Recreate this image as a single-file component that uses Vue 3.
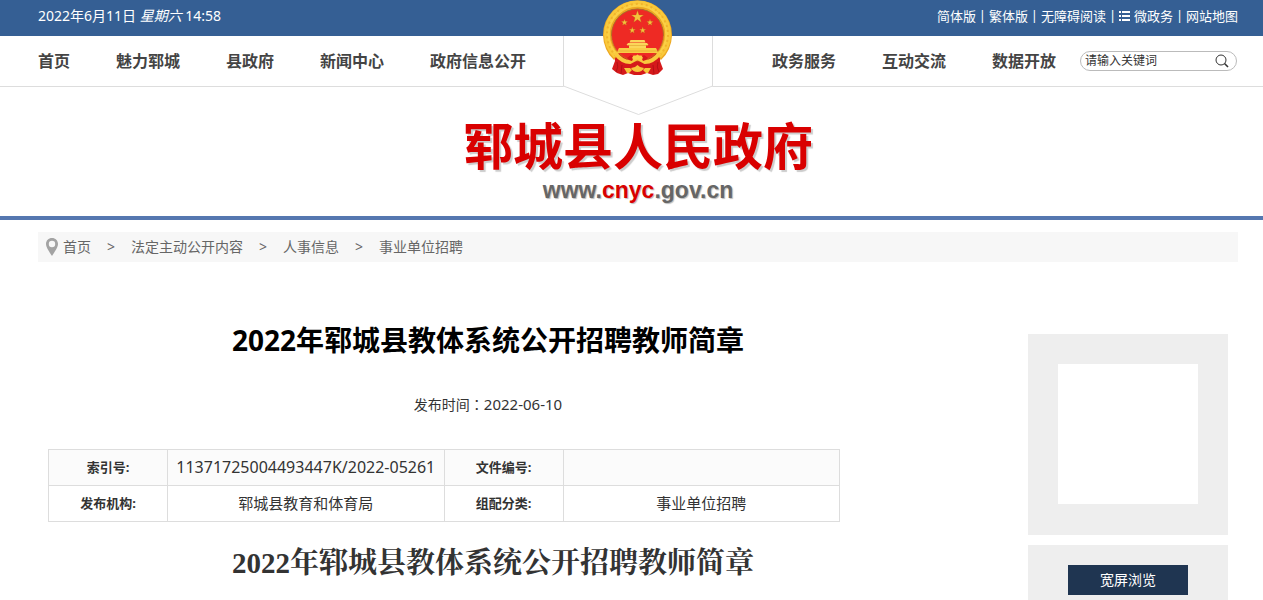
<script setup>
import { ref } from 'vue';

const keyword = ref('请输入关键词');
const wide = ref(false);

const leftNav = ['首页', '魅力郓城', '县政府', '新闻中心', '政府信息公开'];
const rightNav = ['政务服务', '互动交流', '数据开放'];
const topLinks = ['简体版', '繁体版', '无障碍阅读', '微政务', '网站地图'];
const crumbs = ['首页', '法定主动公开内容', '人事信息', '事业单位招聘'];

const title = '2022年郓城县教体系统公开招聘教师简章';

// five-pointed star as an svg points string
const star = (cx, cy, r) => {
  const points = [];
  for (let i = 0; i < 10; i++) {
    const radius = i % 2 ? r * 0.4 : r;
    const angle = (Math.PI / 5) * i - Math.PI / 2;
    points.push(`${(cx + radius * Math.cos(angle)).toFixed(2)},${(cy + radius * Math.sin(angle)).toFixed(2)}`);
  }
  return points.join(' ');
};

const stars = [
  star(74.5, 17, 6.5),
  star(61.5, 22.5, 3.5),
  star(87, 22.5, 3.5),
  star(69.3, 30.3, 3.5),
  star(79.7, 30.3, 3.5),
];
</script>

<template>
  <div class="page" :class="{ wide }">
    <header class="header">
      <div class="topbar">
        <div>2022年6月11日 <em>星期六</em> 14:58</div>
        <ul class="top-links">
          <li v-for="link in topLinks" :key="link">
            <svg v-if="link === '微政务'" class="list-icon" viewBox="0 0 11 11" fill="#fff">
              <path d="M0 1h2v2H0zM3 1h8v2H3zM0 5h2v2H0zM3 5h8v2H3zM0 9h2v2H0zM3 9h8v2H3z" />
            </svg>
            <a href="#">{{ link }}</a>
          </li>
        </ul>
      </div>

      <div class="navbar">
        <nav class="nav">
          <a v-for="item in leftNav" :key="item" href="#">{{ item }}</a>
        </nav>
        <div class="emblem">
          <svg width="150" height="116" viewBox="0 0 150 116">
            <path d="M0 36H150V86L75.500 114.500L0 86Z" fill="#fff" />
            <path d="M.5 36V86L75.500 114.500L149.500 86V36" fill="none" stroke="#ddd" />
            <path d="M51 53H98L97 61L100 69L95 74L90 75L84 73L78 75H71L65 73L60 75L54 73L49 69L52 61Z" fill="#d5191b" />
            <!-- ring of grain ears -->
            <path d="M51 60A34.500 34.500 0 1 1 98 60L93 53A26 26 0 1 0 56 53Z" fill="#eda823" />
            <circle cx="74.500" cy="35" r="26" fill="#ee2a24" stroke="#b9741a" stroke-width=".8" />
            <path d="M52 57A32 32 0 1 1 97 57" fill="none" stroke="#fac93a" stroke-width="3" />
            <path d="M54 55A29 29 0 1 1 95 55" fill="none" stroke="#fbd045" stroke-width="3" />
            <path d="M53 56A30.500 30.500 0 1 1 96 56" fill="none" stroke="#f0b42c" stroke-width="2"
              stroke-dasharray="2 3" />
            <polygon v-for="points in stars" :key="points" :points="points" fill="#f4c33c" stroke="#b85a18"
              stroke-width=".3" />
            <!-- gate tower -->
            <path d="M67.500 40H81.500L82.500 42.500H66.500ZM65 43H84L85.500 45H63.500ZM66 45H83V48H66Z" fill="#fbd65a" />
            <path d="M56 48H93L94 50L95 53H54L55 50Z" fill="#f9cc45" />
            <path d="M64 45.500H85M55 51H94" stroke="#e0a22c" stroke-width=".6" />
            <!-- crossed ears with the gear between them -->
            <path d="M52 53Q59 62 67 62L74.500 58L82 62Q90 62 97 53" fill="none" stroke="#f9c93e" stroke-width="4" />
            <path d="M64 58L68 55L71 57L69 61L66 60ZM85 58L81 55L78 57L80 61L83 60Z" fill="#d5191b" />
            <path d="M69 58L70.500 55.500H73L74.500 54.500L76 55.500H78.500L80 58L78 60L74.500 59L71 60Z" fill="#fbd045" />
            <path d="M68 68L72 67L74.500 65L77 67L81 68Q79 72 74.500 72Q70 72 68 68Z" fill="#f7c63c" />
            <path d="M61 68L67 68L69 70L66 73H64ZM88 68L82 68L80 70L83 73H85Z" fill="#f7c63c" />
            <path d="M54 62Q56 67 53 72M95 62Q93 67 96 72M59 65L58 74M90 65L91 74" fill="none" stroke="#a90f12"
              stroke-width=".8" />
          </svg>
        </div>
        <div class="nav-right">
          <nav class="nav">
            <a v-for="item in rightNav" :key="item" href="#">{{ item }}</a>
          </nav>
          <form class="search" @submit.prevent>
            <input v-model="keyword" type="text" aria-label="请输入关键词">
            <button type="submit" aria-label="搜索">
              <svg width="14" height="14" viewBox="0 0 14 14" fill="none" stroke="#333">
                <circle cx="6" cy="6" r="5" />
                <path d="M9.500 9.500L13 13" stroke-width="1.600" />
              </svg>
            </button>
          </form>
        </div>
      </div>
    </header>

    <div class="banner">
      <div class="site-name">郓城县人民政府</div>
      <div class="site-url">www.<span>cnyc</span>.gov.cn</div>
    </div>

    <div class="content">
      <nav class="crumbs">
        <svg width="12" height="18" viewBox="0 0 12 18">
          <path fill="#a3a3a3" fill-rule="evenodd"
            d="M6 0C2.500 0 0 2.600 0 6C0 9.500 3.500 14 6 18C8.500 14 12 9.500 12 6C12 2.600 9.500 0 6 0ZM6 2.800A3.200 3.200 0 1 1 6 9.200A3.200 3.200 0 1 1 6 2.800Z" />
        </svg>
        <template v-for="(crumb, i) in crumbs" :key="crumb">
          <span v-if="i" class="arrow">&gt;</span>
          <a href="#">{{ crumb }}</a>
        </template>
      </nav>

      <div class="columns">
        <main class="article">
          <h1>{{ title }}</h1>
          <p class="publish">发布时间：<time>2022-06-10</time></p>
          <div class="article-body">
            <table>
              <tbody>
                <tr>
                  <th scope="row">索引号:</th>
                  <td class="code">11371725004493447K/2022-05261</td>
                  <th scope="row">文件编号:</th>
                  <td></td>
                </tr>
                <tr>
                  <th scope="row">发布机构:</th>
                  <td>郓城县教育和体育局</td>
                  <th scope="row">组配分类:</th>
                  <td>事业单位招聘</td>
                </tr>
              </tbody>
            </table>
            <h2>{{ title }}</h2>
          </div>
        </main>

        <aside class="side">
          <div class="panel qr">
            <div class="qr-box"></div>
          </div>
          <div class="panel tools">
            <button type="button" @click="wide = !wide">宽屏浏览</button>
          </div>
        </aside>
      </div>
    </div>
  </div>
</template>

<style>
body {
  margin: 0;
  background: #fff;
}
</style>

<style scoped>
.page {
  font-family: "Noto Sans", "Noto Sans CJK SC", sans-serif;
  font-size: 14px;
  color: #333;
}

a {
  color: inherit;
  text-decoration: none;
}

.header {
  position: relative;
}

.topbar {
  display: flex;
  justify-content: space-between;
  align-items: center;
  height: 36px;
  padding: 0 25px 6px 38px;
  box-sizing: border-box;
  background: #355f94;
  color: #fff;
  white-space: nowrap;
}

.top-links {
  display: flex;
  margin: 0;
  padding: 0;
  list-style: none;
  font-size: 13px;
}

.top-links li {
  display: flex;
  align-items: center;
}

.top-links li + li::before {
  content: "|";
  width: 13px;
  text-align: center;
}

.list-icon {
  width: 11px;
  height: 11px;
  margin-right: 4px;
}

.navbar {
  display: grid;
  grid-template-columns: 1fr 150px 1fr;
  align-items: center;
  height: 50px;
  padding: 0 25px 0 38px;
  border-bottom: 1px solid #ddd;
  white-space: nowrap;
}

.nav {
  display: flex;
  gap: 46px;
  padding-bottom: 2px;
  font-size: 16px;
  font-weight: bold;
  color: #444;
}

/* the emblem hangs over the blue bar and the line under the menu */
.emblem {
  position: relative;
  align-self: start;
  height: 50px;
}

.emblem svg {
  position: absolute;
  top: -36px;
  left: 0;
}

.nav-right {
  display: flex;
  justify-content: flex-end;
  align-items: center;
  gap: 24px;
  padding-right: 1px;
}

.search {
  display: flex;
  align-items: center;
  width: 157px;
  height: 20px;
  box-sizing: border-box;
  padding: 0 7px 0 4px;
  border: 1px solid #bbb;
  border-radius: 10px;
}

.search input {
  flex: 1;
  min-width: 0;
  padding: 0;
  border: 0;
  outline: 0;
  background: none;
  font-family: inherit;
  font-size: 12px;
  line-height: 18px;
  color: #333;
}

.search button {
  display: flex;
  padding: 0;
  border: 0;
  background: none;
  cursor: pointer;
}

.banner {
  padding: 32px 25px 13px 38px;
  border-bottom: 4px solid #5577b0;
  font-family: "Liberation Sans", "Noto Sans CJK SC", sans-serif;
  font-weight: bold;
  text-align: center;
}

.site-name {
  font-size: 50px;
  line-height: 58px;
  color: #d90000;
  text-shadow: 2px 2px 1px #ccc;
}

.site-url {
  font-size: 23px;
  line-height: 26px;
  color: #666;
  text-shadow: 1px 1px 1px #bbb;
}

.site-url span {
  color: #d90000;
}

.content {
  padding: 12px 25px 0 38px;
}

.crumbs {
  display: flex;
  align-items: center;
  height: 30px;
  padding-left: 8px;
  background: #f7f7f7;
  color: #666;
}

.crumbs svg {
  margin-right: 5px;
}

.crumbs a,
.crumbs .arrow {
  padding-bottom: 2px;
}

.crumbs .arrow {
  width: 40px;
  text-align: center;
}

.columns {
  display: flex;
  justify-content: space-between;
}

.article {
  width: 75%;
}

.article h1 {
  margin: 58px 0 0;
  font-size: 28px;
  line-height: 40px;
  text-align: center;
  color: #000;
}

.publish {
  margin: 34px 0 0;
  font-family: "Noto Sans", "Noto Sans CJK TC", sans-serif;
  line-height: 20px;
  text-align: center;
}

.publish time {
  font-size: 15px;
}

.article-body {
  padding: 34px 0 0 10px;
}

table {
  width: 89%;
  border-collapse: collapse;
  table-layout: fixed;
  text-align: center;
}

th,
td {
  height: 33px;
  padding: 0 0 2px;
  border: 1px solid #ddd;
  line-height: 20px;
}

th {
  width: 15%;
  font-size: 13px;
}

td {
  width: 35%;
  font-size: 15px;
}

td.code {
  font-size: 16px;
}

tr:first-child {
  background: #fbfbfb;
}

.article-body h2 {
  margin: 21px 0 0;
  font-family: "Liberation Serif", "Noto Serif CJK SC", "Noto Sans CJK SC", serif;
  font-size: 29px;
  line-height: 40px;
  text-align: center;
}

.side {
  width: 200px;
  margin: 72px 10px 0 0;
}

.panel {
  background: #eee;
}

.qr {
  padding: 30px 30px 31px;
}

.qr-box {
  height: 140px;
  background: #fff;
}

.tools {
  margin-top: 10px;
  padding: 20px 40px;
}

.tools button {
  display: block;
  width: 100%;
  height: 30px;
  padding: 0 0 2px;
  border: 0;
  background: #1f3551;
  color: #fff;
  font-family: inherit;
  font-size: 14px;
  cursor: pointer;
}

.wide .article {
  width: 100%;
}
</style>
